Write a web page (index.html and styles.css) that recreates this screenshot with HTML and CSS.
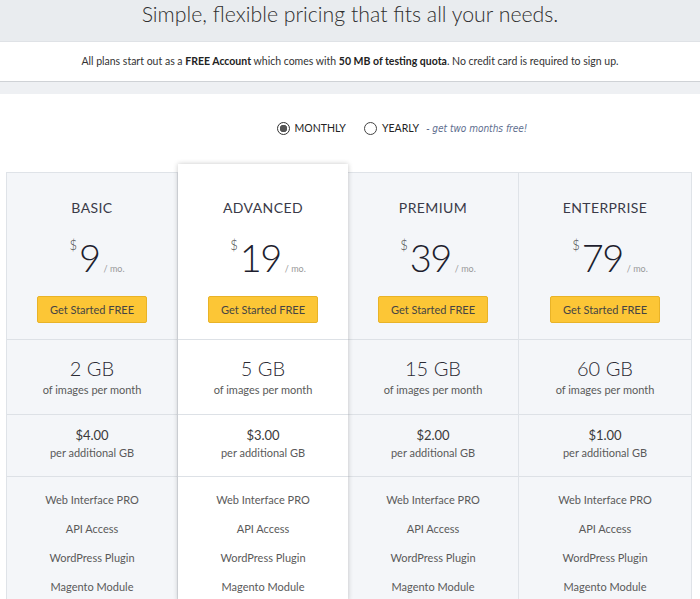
FILE: index.html
```html
<!DOCTYPE html>
<html>
<head>
<meta charset="utf-8">
<link rel="stylesheet" href="styles.css">
</head>
<body>
<header class="hero">
  <h1 class="hero-title">Simple, flexible pricing that fits all your needs.</h1>
</header>
<div class="notice">All plans start out as a <b>FREE Account</b> which comes with <b>50 MB of testing quota</b>. No credit card is required to sign up.</div>
<div class="notice-shadow"></div>
<main class="pricing">
  <div class="billing">
    <label class="opt"><span class="radio checked"></span>MONTHLY</label>
    <label class="opt"><span class="radio"></span>YEARLY <span class="promo">- get two months free!</span></label>
  </div>
  <div class="plans">
    <div class="plan">
      <div class="plan-head">
        <div class="plan-name">BASIC</div>
        <div class="price"><span class="cur">$</span><span class="amt">9</span><span class="per">/ mo.</span></div>
        <a class="btn">Get Started FREE</a>
      </div>
      <div class="quota"><div class="big">2 GB</div><div class="sub">of images per month</div></div>
      <div class="extra"><div class="mid">$4.00</div><div class="sub">per additional GB</div></div>
      <ul class="features"><li>Web Interface PRO</li><li>API Access</li><li>WordPress Plugin</li><li>Magento Module</li></ul>
    </div>
    <div class="plan featured">
      <div class="plan-head">
        <div class="plan-name">ADVANCED</div>
        <div class="price"><span class="cur">$</span><span class="amt">19</span><span class="per">/ mo.</span></div>
        <a class="btn">Get Started FREE</a>
      </div>
      <div class="quota"><div class="big">5 GB</div><div class="sub">of images per month</div></div>
      <div class="extra"><div class="mid">$3.00</div><div class="sub">per additional GB</div></div>
      <ul class="features"><li>Web Interface PRO</li><li>API Access</li><li>WordPress Plugin</li><li>Magento Module</li></ul>
    </div>
    <div class="plan">
      <div class="plan-head">
        <div class="plan-name">PREMIUM</div>
        <div class="price"><span class="cur">$</span><span class="amt">39</span><span class="per">/ mo.</span></div>
        <a class="btn">Get Started FREE</a>
      </div>
      <div class="quota"><div class="big">15 GB</div><div class="sub">of images per month</div></div>
      <div class="extra"><div class="mid">$2.00</div><div class="sub">per additional GB</div></div>
      <ul class="features"><li>Web Interface PRO</li><li>API Access</li><li>WordPress Plugin</li><li>Magento Module</li></ul>
    </div>
    <div class="plan">
      <div class="plan-head">
        <div class="plan-name">ENTERPRISE</div>
        <div class="price"><span class="cur">$</span><span class="amt">79</span><span class="per">/ mo.</span></div>
        <a class="btn">Get Started FREE</a>
      </div>
      <div class="quota"><div class="big">60 GB</div><div class="sub">of images per month</div></div>
      <div class="extra"><div class="mid">$1.00</div><div class="sub">per additional GB</div></div>
      <ul class="features"><li>Web Interface PRO</li><li>API Access</li><li>WordPress Plugin</li><li>Magento Module</li></ul>
    </div>
  </div>
</main>
</body>
</html>
```
FILE: styles.css
```css
* { box-sizing: border-box; }
html, body { margin: 0; padding: 0; }
body {
  font-family: Lato, "Open Sans", sans-serif;
  color: #333;
  background: #fff;
  overflow: hidden;
}
.hero {
  background: #e9ecef;
  height: 42px;
  border-bottom: 1px solid #dfe2e6;
}
.hero-title {
  margin: 0;
  text-align: center;
  font-size: 21.3px;
  font-weight: 300;
  line-height: 28px;
  color: #2e2e2e;
}
.notice {
  height: 40px;
  line-height: 38px;
  text-align: center;
  font-size: 10.5px;
  color: #333;
  background: #fff;
  border-bottom: 1px solid #cfd2d6;
}
.notice b { font-weight: 700; color: #222; }
.notice-shadow {
  height: 12px;
  background: #eef0f3;
}
.pricing { padding-top: 25px; }
.billing {
  display: flex;
  justify-content: center;
  gap: 18px;
  padding-left: 104px;
  font-size: 10.5px;
  color: #222;
  height: 18px;
  align-items: center;
}
.opt { display: flex; align-items: center; gap: 5px; }
.radio {
  width: 13px; height: 13px;
  border-radius: 50%;
  border: 1px solid #444;
  background: #fff;
  display: inline-block;
}
.radio.checked {
  border-color: #333;
  background: radial-gradient(circle, #555 0 3.5px, #fff 4px);
}
.promo {
  font-style: italic;
  color: #5d6d8e;
  font-size: 10px;
  margin-left: 2px;
  font-family: "DejaVu Sans Condensed", "DejaVu Sans", sans-serif;
}
.plans {
  display: grid;
  grid-template-columns: 171px 170px 171px 173px;
  width: 685px;
  margin: 35px 0 0 6px;
  border-left: 1px solid #dfe3e8;
}
.plan {
  background: #f4f6f9;
  border-top: 1px solid #dfe3e8;
  border-right: 1px solid #dfe3e8;
  text-align: center;
}
.plan.featured {
  background: #fff;
  margin-top: -8px;
  border: none;
  box-shadow: 0 0 5px rgba(0,0,0,0.22);
  position: relative;
  z-index: 1;
}
.plan-head {
  padding: 26px 0 16px;
  border-bottom: 1px solid #dde1e6;
}
.featured .plan-head { padding-top: 35px; }
.plan-name {
  font-size: 14px;
  line-height: 18px;
  letter-spacing: 0.4px;
  color: #3a3a48;
}
.price {
  margin-top: 18px;
  height: 44px;
  line-height: 44px;
  display: flex;
  justify-content: center;
  align-items: baseline;
  margin-left: 10px;
}
.cur {
  font-size: 13px;
  font-weight: 300;
  align-self: flex-start;
  line-height: 20px;
  margin-right: 2px;
  color: #444;
}
.amt {
  font-size: 38px;
  font-weight: 300;
  letter-spacing: -1.5px;
  color: #1e1e2e;
}
.per {
  font-size: 9px;
  color: #999;
  margin-left: 4px;
}
.btn {
  display: block;
  width: 110px;
  height: 27px;
  margin: 17px auto 0;
  background: #fcc636;
  border: 1px solid #e9b327;
  border-radius: 2px;
  font-size: 11px;
  line-height: 25px;
  color: #444;
}
.quota {
  padding: 16px 0 16px;
  border-bottom: 1px solid #dde1e6;
}
.big {
  font-size: 20px;
  line-height: 24px;
  font-weight: 300;
  color: #2a2a33;
}
.sub {
  font-size: 11px;
  line-height: 16px;
  margin-top: 2px;
  color: #5a5a5a;
}
.extra {
  padding: 11px 0 15px;
  border-bottom: 1px solid #dde1e6;
}
.mid {
  font-size: 13px;
  line-height: 18px;
  color: #3a3a3a;
}
.extra .sub { margin-top: 1px; }
.features {
  list-style: none;
  margin: 0;
  padding: 8px 0 0;
}
.features li {
  font-size: 11px;
  line-height: 29px;
  color: #5a5a5a;
}
```
